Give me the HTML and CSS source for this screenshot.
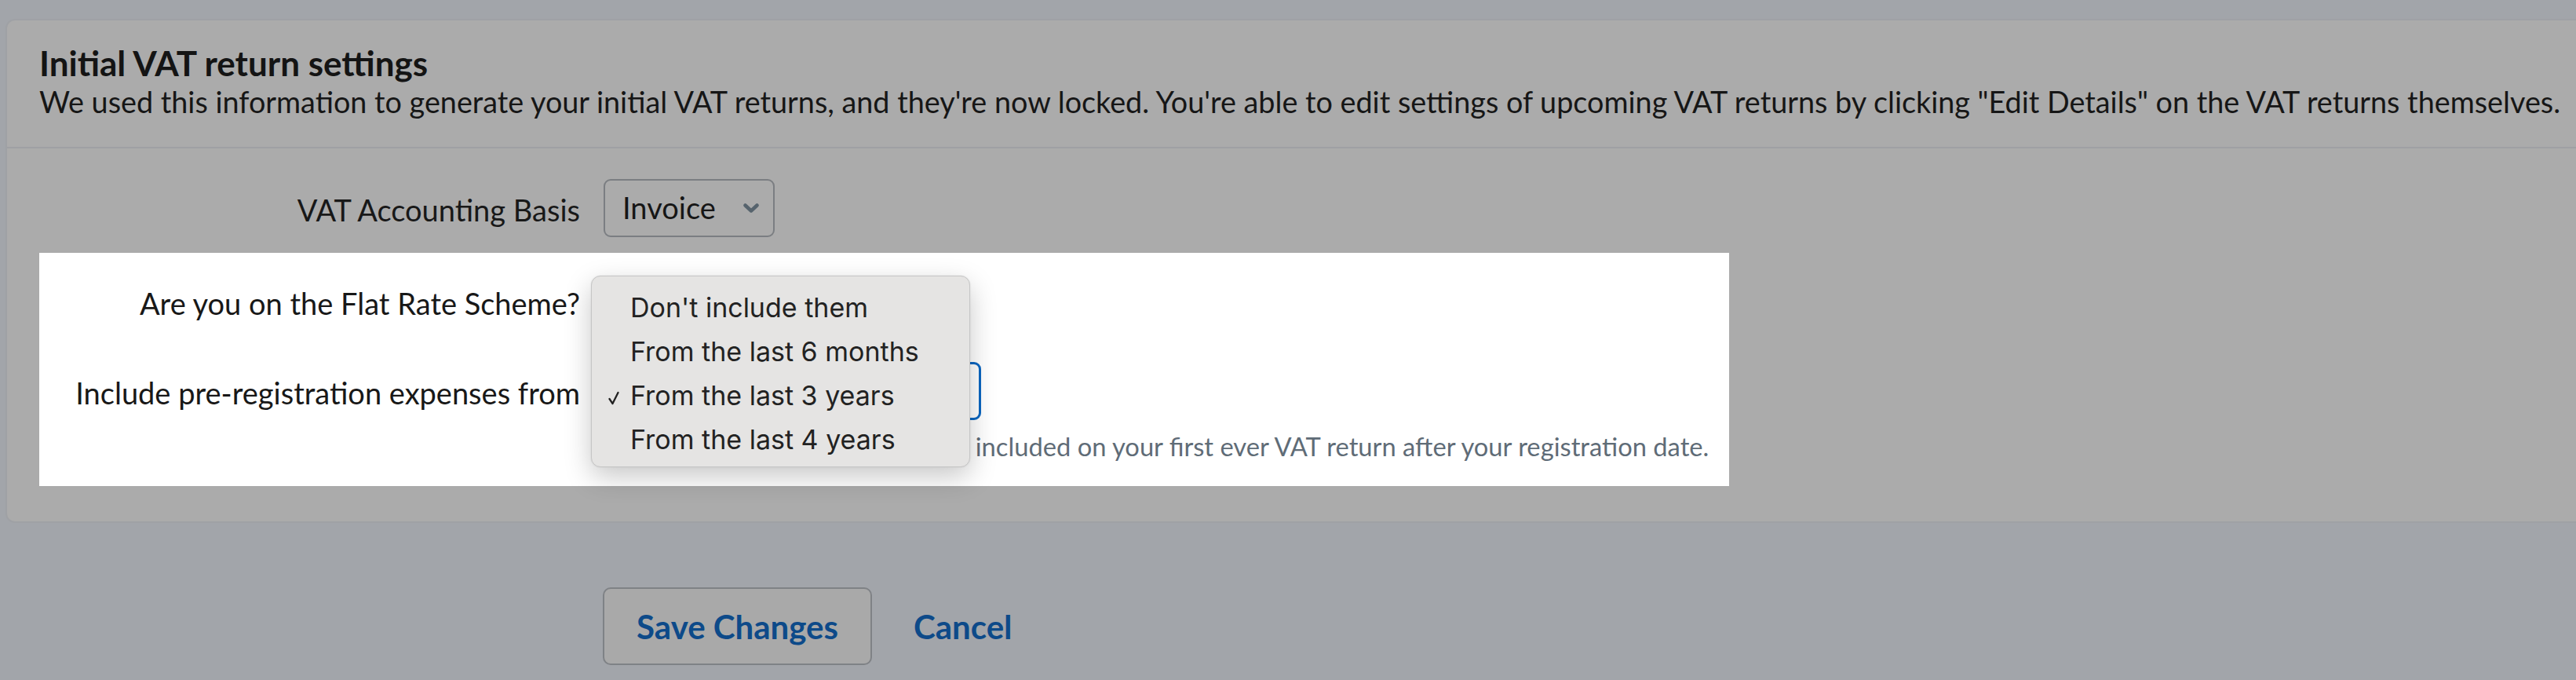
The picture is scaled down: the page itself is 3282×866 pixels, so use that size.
FILE: index.html
```html
<!DOCTYPE html>
<html lang="en">
<head>
<meta charset="utf-8">
<title>Initial VAT return settings</title>
<link rel="stylesheet" href="styles.css">
</head>
<body>
<div class="page">
  <section class="card">
    <header class="card-head">
      <h2 class="title">Initial VAT return settings</h2>
      <p class="desc">We used this information to generate your initial VAT returns, and they're now locked. You're able to edit settings of upcoming VAT returns by clicking "Edit Details" on the VAT returns themselves.</p>
    </header>
    <div class="card-body">
      <div class="row">
        <label class="label">VAT Accounting Basis</label>
        <div class="select select-basis">
          <span class="select-value">Invoice</span>
          <svg class="chevron" viewBox="0 0 20 12" width="20" height="12"><path d="M2.5 2.5 L10 9.5 L17.5 2.5" fill="none" stroke="#56636d" stroke-width="4.5" stroke-linecap="round" stroke-linejoin="round"/></svg>
        </div>
      </div>
      <div class="spotlight">
        <div class="row row-flat">
          <label class="label">Are you on the Flat Rate Scheme?</label>
          <div class="select select-basis select-short">
            <span class="select-value">No</span>
            <svg class="chevron" viewBox="0 0 20 12" width="20" height="12"><path d="M2.5 2.5 L10 9.5 L17.5 2.5" fill="none" stroke="#56636d" stroke-width="4.5" stroke-linecap="round" stroke-linejoin="round"/></svg>
          </div>
        </div>
        <div class="row row-include">
          <label class="label">Include pre-registration expenses from</label>
          <div class="select select-wide select-focus">
            <span class="select-value">From the last 3 years</span>
            <svg class="chevron" viewBox="0 0 20 12" width="20" height="12"><path d="M2.5 2.5 L10 9.5 L17.5 2.5" fill="none" stroke="#56636d" stroke-width="4.5" stroke-linecap="round" stroke-linejoin="round"/></svg>
          </div>
          <p class="help">Pre-registration expenses will be included on your first ever VAT return after your registration date.</p>
        </div>
        <ul class="menu">
          <li class="menu-item"><span class="check"></span>Don't include them</li>
          <li class="menu-item"><span class="check"></span>From the last 6 months</li>
          <li class="menu-item"><span class="check"><svg viewBox="0 0 14 18" width="14" height="18"><polyline points="1.5,10 5.5,16 12.5,2" fill="none" stroke="#222" stroke-width="2.3" stroke-linecap="round" stroke-linejoin="round"/></svg></span>From the last 3 years</li>
          <li class="menu-item"><span class="check"></span>From the last 4 years</li>
        </ul>
      </div>
    </div>
  </section>
  <div class="actions">
    <button class="btn btn-save" type="button">Save Changes</button>
    <button class="btn-link" type="button">Cancel</button>
  </div>
</div>
</body>
</html>
```
FILE: styles.css
```css
html, body {
  margin: 0;
  padding: 0;
}
body {
  background: #a2a5aa;
  font-family: Lato, "Liberation Sans", sans-serif;
  color: #161616;
  overflow: hidden;
  width: 3282px;
  height: 866px;
}
.page {
  padding-top: 24px;
  padding-left: 7px;
}
.card {
  background: #ababab;
  border: 2px solid #9fa1a5;
  border-radius: 12px;
  margin-right: -40px;
}
.card-head {
  padding: 28px 20px 35px 41px;
  border-bottom: 2px solid #9fa0a4;
}
.title {
  margin: 0;
  font-size: 44px;
  line-height: 1.2;
  font-weight: 700;
  color: #141414;
}
.desc {
  margin: 0;
  font-size: 37.77px;
  line-height: 45.6px;
  white-space: nowrap;
  color: #161616;
}
.card-body {
  padding: 39px 0 45px 41px;
}
.row {
  display: grid;
  grid-template-columns: 689px 1fr;
  column-gap: 30px;
  align-items: center;
}
.row-flat {
  min-height: 74px;
}
.label {
  text-align: right;
  font-size: 38px;
  line-height: 1.2;
  padding-top: 4px;
  color: #181818;
}
.select {
  box-sizing: border-box;
  height: 74px;
  border: 2px solid #7b7e82;
  border-radius: 9px;
  display: flex;
  align-items: center;
  justify-content: space-between;
  padding: 0 18px 0 22px;
  font-size: 38px;
}
.select-value {
  line-height: 1;
  padding-bottom: 2px;
}
.select-basis {
  width: 218px;
}
.select-short {
  height: 60px;
}
.select-wide {
  width: 481px;
}
.select-focus {
  border: 3px solid #0b66c1;
}
.spotlight {
  position: relative;
  width: 2153px;
  margin-top: 20px;
  background: #ffffff;
  padding: 25px 0 31px;
  display: flex;
  flex-direction: column;
  gap: 40px;
}
.row-include .help {
  grid-column: 2;
  margin: 15px 0 0;
  font-size: 32.7px;
  line-height: 38px;
  color: #5f6c77;
  white-space: nowrap;
}
.menu {
  position: absolute;
  left: 703px;
  top: 29px;
  box-sizing: border-box;
  width: 483px;
  height: 244px;
  margin: 0;
  padding: 11px 0 0;
  list-style: none;
  background: #e5e4e3;
  border: 1px solid #c6c6c6;
  border-radius: 12px;
  box-shadow: 0 12px 34px rgba(0, 0, 0, 0.22), 0 0 2px rgba(0, 0, 0, 0.1);
  font-family: Inter, "Liberation Sans", sans-serif;
  font-size: 34px;
  color: #222222;
}
.menu-item {
  display: flex;
  align-items: center;
  height: 56px;
  padding-left: 21px;
}
.check {
  display: inline-flex;
  width: 28px;
  justify-content: flex-start;
  padding-top: 8px;
}
.actions {
  display: flex;
  align-items: center;
  gap: 53px;
  margin-top: 82px;
  padding-left: 761px;
}
.btn {
  font-family: Lato, "Liberation Sans", sans-serif;
  font-size: 42px;
  font-weight: 700;
  color: #0d4a89;
  background: #a9a9a9;
  border: 2px solid #7f8286;
  border-radius: 10px;
  width: 343px;
  height: 99px;
  padding: 0;
}
.btn-link {
  font-family: Lato, "Liberation Sans", sans-serif;
  font-size: 42px;
  font-weight: 700;
  color: #0d4a89;
  background: none;
  border: 0;
  padding: 0;
}
```
